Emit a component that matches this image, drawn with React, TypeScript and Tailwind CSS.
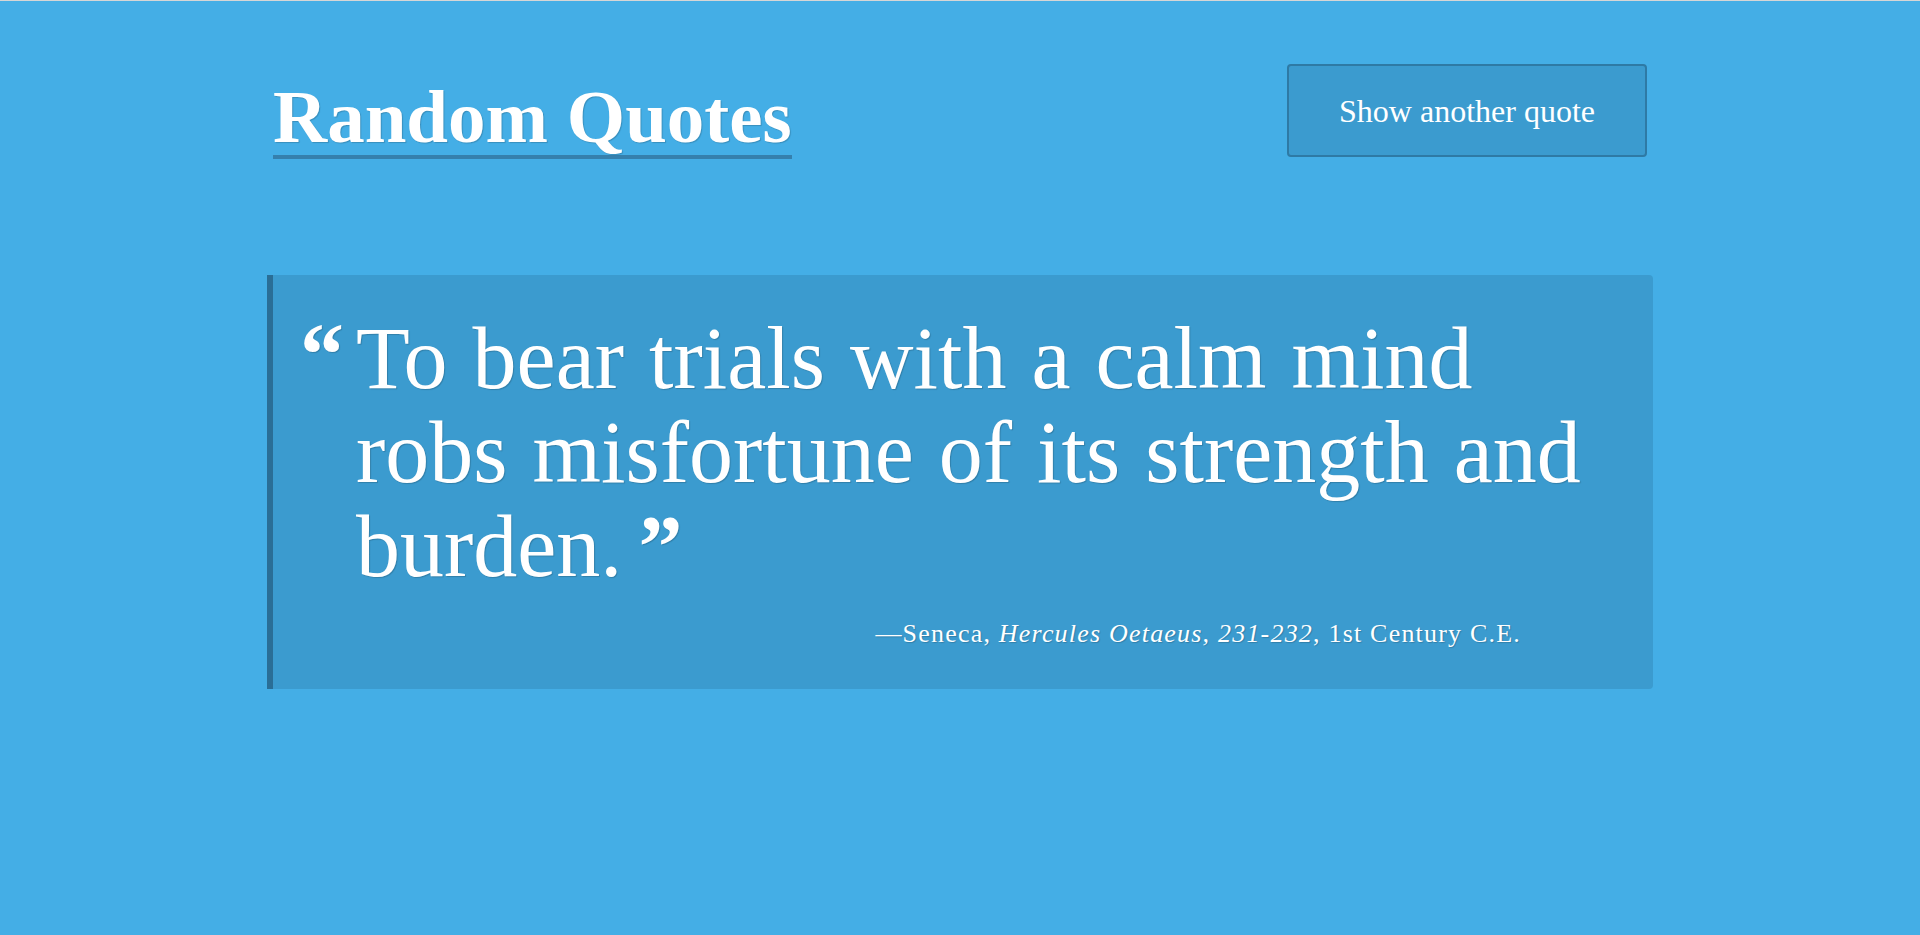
export default function App() {
  return (
    <div className="min-h-screen bg-[#44aee6] border-t border-[#d6d6d6] font-['Liberation_Serif','Times_New_Roman',serif] text-white [text-shadow:1px_1px_1px_rgba(0,0,0,0.18)]">
      <div className="w-[1386px] mx-auto pt-[63px]">
        {/* header */}
        <header className="flex items-start justify-between px-[6px]">
          <h1 className="mt-[15px] text-[75px] leading-[76px] font-bold border-b-4 border-[#3580ad]">
            Random Quotes
          </h1>
          <button className="w-[360px] h-[93px] rounded-[4px] border-2 border-[#2e7aa5] bg-[#3b9bcf] text-[32px] text-white">
            Show another quote
          </button>
        </header>

        {/* quote card */}
        <blockquote className="mt-[116px] bg-[#3b9bcf] border-l-[6px] border-[#2a6e96] rounded-r-[4px] pl-[27px] pr-[47px] pt-[37px] pb-[37px]">
          <div className="flex">
            <span className="w-[56px] shrink-0 text-[88px] leading-[94px] font-bold relative -top-[4px]">“</span>
            <p className="flex-1 text-[88px] leading-[94px] [word-spacing:3px]">
              To bear trials with a calm mind robs misfortune of its strength and burden.
              <span className="ml-[16px] text-[88px] font-bold">”</span>
            </p>
          </div>
          <div className="mt-[22px] text-right pr-[85px] text-[26px] leading-[36px] tracking-[1.2px]">
            —Seneca, <cite className="italic">Hercules Oetaeus, 231-232</cite>, 1st Century C.E.
          </div>
        </blockquote>
      </div>
    </div>
  )
}
